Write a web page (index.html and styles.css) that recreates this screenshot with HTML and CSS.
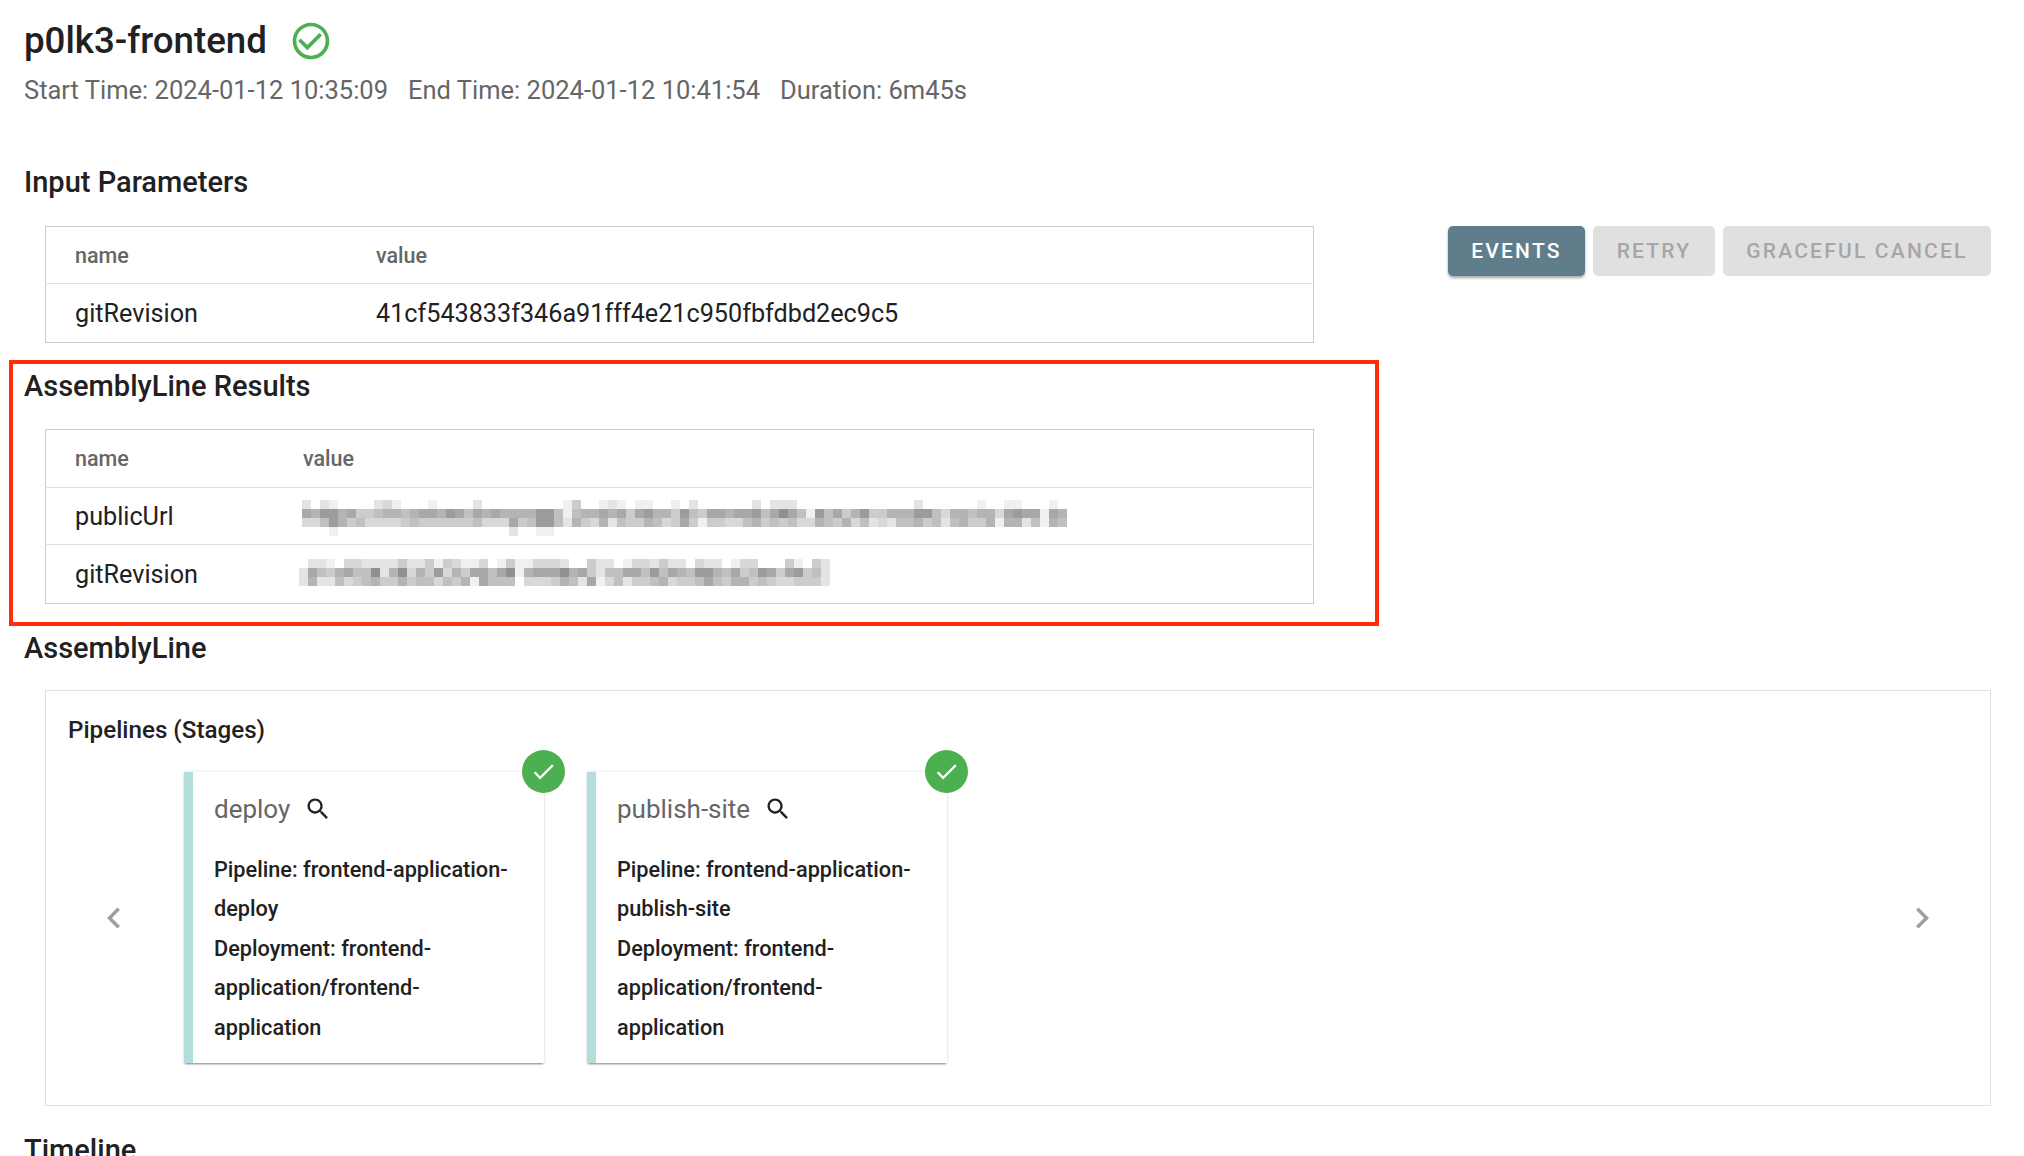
FILE: index.html
```html
<!DOCTYPE html>
<html lang="en">
<head>
<meta charset="utf-8">
<title>p0lk3-frontend</title>
<link rel="stylesheet" href="styles.css">
</head>
<body>
<main class="page">
  <header class="run-head">
    <div class="run-title">
      <h1>p0lk3-frontend</h1>
      <svg class="status-outline" viewBox="0 0 24 24"><path d="M16.59 7.58L10 14.17l-3.59-3.58L5 12l5 5 8-8zM12 2C6.48 2 2 6.48 2 12s4.48 10 10 10 10-4.48 10-10S17.52 2 12 2zm0 18c-4.42 0-8-3.58-8-8s3.58-8 8-8 8 3.58 8 8-3.58 8-8 8z"/></svg>
    </div>
    <p class="run-meta"><span>Start Time: 2024-01-12 10:35:09</span><span>End Time: 2024-01-12 10:41:54</span><span>Duration: 6m45s</span></p>
  </header>

  <section class="input-section">
    <h2>Input Parameters</h2>
    <div class="input-row">
      <table class="kv kv-input">
        <thead><tr><th>name</th><th>value</th></tr></thead>
        <tbody><tr><td>gitRevision</td><td>41cf543833f346a91fff4e21c950fbfdbd2ec9c5</td></tr></tbody>
      </table>
      <div class="actions">
        <button class="btn btn-primary" type="button">EVENTS</button>
        <button class="btn btn-off" type="button" disabled>RETRY</button>
        <button class="btn btn-off" type="button" disabled>GRACEFUL CANCEL</button>
      </div>
    </div>
  </section>

  <section class="results-section">
    <h2>AssemblyLine Results</h2>
    <table class="kv kv-results">
      <thead><tr><th>name</th><th>value</th></tr></thead>
      <tbody>
        <tr class="row-url"><td>publicUrl</td><td><svg class="mosaic mosaic-url" width="765" height="36" shape-rendering="crispEdges"
          data-rows="2021000023100010000200000000014001210110010200000020222000000000000020000001001100010|7688674456656776875767666688515667674786648547767785797518574684466688536656637877176|3358645333345444444533374588526436254465347414433564545336546352325564525644616625165|0001000000000000000000020011"></svg></td></tr>
        <tr class="row-rev"><td>gitRevision</td><td><svg class="mosaic mosaic-rev" width="531" height="27" shape-rendering="crispEdges"
          data-rows="02210332222422414311301411333200422013324220322013300041042|27546755926936483647757916777967425577585765886574587478452|26225345644645535461755503334652713524456344575466454334442"></svg></td></tr>
      </tbody>
    </table>
  </section>

  <section class="line-section">
    <h2>AssemblyLine</h2>
    <div class="panel">
      <h3>Pipelines (Stages)</h3>
      <div class="carousel">
        <svg class="chevron" viewBox="0 0 24 24"><path d="M15.41 7.41L14 6l-6 6 6 6 1.41-1.41L10.83 12z"/></svg>
        <div class="cards">
          <article class="card">
            <span class="badge"><svg viewBox="0 0 24 24"><path d="M9 16.17L4.83 12l-1.42 1.41L9 19 21 7l-1.41-1.41z"/></svg></span>
            <div class="card-title"><span>deploy</span><svg class="search" viewBox="0 0 24 24"><path d="M15.5 14h-.79l-.28-.27C15.41 12.59 16 11.11 16 9.5 16 5.91 13.09 3 9.5 3S3 5.91 3 9.5 5.91 16 9.5 16c1.61 0 3.09-.59 4.23-1.57l.27.28v.79l5 4.99L20.49 19l-4.99-5zm-6 0C7.01 14 5 11.99 5 9.5S7.01 5 9.5 5 14 7.01 14 9.5 11.99 14 9.5 14z"/></svg></div>
            <p>Pipeline: frontend-application-deploy</p>
            <p>Deployment: frontend-application/frontend-application</p>
          </article>
          <article class="card">
            <span class="badge"><svg viewBox="0 0 24 24"><path d="M9 16.17L4.83 12l-1.42 1.41L9 19 21 7l-1.41-1.41z"/></svg></span>
            <div class="card-title"><span>publish-site</span><svg class="search" viewBox="0 0 24 24"><path d="M15.5 14h-.79l-.28-.27C15.41 12.59 16 11.11 16 9.5 16 5.91 13.09 3 9.5 3S3 5.91 3 9.5 5.91 16 9.5 16c1.61 0 3.09-.59 4.23-1.57l.27.28v.79l5 4.99L20.49 19l-4.99-5zm-6 0C7.01 14 5 11.99 5 9.5S7.01 5 9.5 5 14 7.01 14 9.5 11.99 14 9.5 14z"/></svg></div>
            <p>Pipeline: frontend-application-publish-site</p>
            <p>Deployment: frontend-application/frontend-application</p>
          </article>
        </div>
        <svg class="chevron" viewBox="0 0 24 24"><path d="M10 6L8.59 7.41 13.17 12l-4.58 4.59L10 18l6-6z"/></svg>
      </div>
    </div>
  </section>

  <section class="timeline-section">
    <h2>Timeline</h2>
  </section>
</main>
<div class="callout"></div>
<script src="script.js"></script>
</body>
</html>
```

FILE: styles.css
```css
html, body {
  margin: 0;
  height: 1156px;
  overflow: hidden;
  background: #fff;
}
body {
  position: relative;
  font-family: Roboto, "Liberation Sans", sans-serif;
  color: #212121;
}
.page {
  padding: 17px 33px 0 24px;
}
.run-title {
  display: flex;
  align-items: center;
  height: 48px;
}
h1 {
  margin: 0;
  font-size: 36.7px;
  font-weight: 500;
  line-height: 48px;
}
.status-outline {
  width: 44px;
  height: 44px;
  margin-left: 22px;
  fill: #4caf50;
}
.run-meta {
  display: flex;
  gap: 20px;
  margin: 7px 0 0;
  font-size: 25.5px;
  line-height: 36px;
  color: #666;
}
h2 {
  margin: 0;
  font-size: 29px;
  font-weight: 500;
  line-height: 40px;
}
.input-section {
  margin-top: 54px;
}
.input-row {
  display: flex;
  justify-content: space-between;
  align-items: flex-start;
  margin-top: 24px;
}
.kv {
  width: 1269px;
  margin-left: 21px;
  border-collapse: collapse;
  table-layout: fixed;
  border: 1px solid #ccc;
}
.input-row .kv {
  flex: none;
}
.kv th:first-child, .kv td:first-child {
  padding-left: 29px;
}
.kv th, .kv td {
  text-align: left;
  padding: 0;
}
.kv th {
  height: 56px;
  font-size: 21.5px;
  font-weight: 500;
  color: #666;
}
.kv td {
  height: 58px;
  font-size: 25.2px;
  border-top: 1px solid #e0e0e0;
}
.kv-input th:first-child { width: 301px; }
.kv-results th:first-child { width: 228px; }
.kv-results th { height: 57px; }
.row-url td { height: 56px; }
.row-rev td { height: 58px; }
.mosaic {
  display: block;
}
.mosaic-url { margin: 4px 0 0 -1px; }
.mosaic-rev { margin: 0 0 4px -4px; }
.actions {
  display: flex;
  gap: 8px;
}
.btn {
  height: 50px;
  padding: 0 23.5px;
  border: 0;
  border-radius: 5px;
  font-family: inherit;
  font-size: 21px;
  font-weight: 500;
  letter-spacing: 2.2px;
}
.btn-primary {
  color: #fff;
  background: #607d8b;
  box-shadow: 0 2px 3px rgba(0, 0, 0, .35);
}
.btn-off {
  color: #a6a6a6;
  background: #e0e0e0;
}
.results-section {
  margin-top: 23px;
}
.results-section .kv {
  margin-top: 23px;
}
.line-section {
  margin-top: 24px;
}
.panel {
  height: 416px;
  margin: 22px 0 0 21px;
  border: 1px solid #e0e0e0;
  box-sizing: border-box;
  padding: 0 47px 0 22px;
}
h3 {
  margin: 0;
  padding-top: 23px;
  font-size: 24.2px;
  font-weight: 500;
  line-height: 32px;
}
.carousel {
  display: flex;
  justify-content: space-between;
  align-items: center;
  margin: 26px 0 0 25px;
}
.chevron {
  width: 42px;
  height: 42px;
  fill: #9e9e9e;
}
.cards {
  display: flex;
  gap: 43px;
  flex: 1;
  margin-left: 49px;
}
.card {
  position: relative;
  width: 360px;
  height: 291px;
  box-sizing: border-box;
  padding: 16px 24px 0 21px;
  border-left: 9px solid #b2dfdb;
  background: #fff;
  box-shadow: 0 2px 2px -1px rgba(0, 0, 0, .45), 0 0 3px rgba(0, 0, 0, .12);
}
.card-title {
  display: flex;
  align-items: center;
  gap: 14px;
  height: 42px;
  font-size: 26px;
  color: #666;
}
.search {
  width: 28px;
  height: 28px;
  fill: #212121;
}
.card p {
  margin: 0;
  font-size: 21.7px;
  font-weight: 500;
  line-height: 39.5px;
}
.card-title + p {
  margin-top: 19.5px;
}
.badge {
  position: absolute;
  top: -22px;
  right: -21px;
  display: flex;
  align-items: center;
  justify-content: center;
  width: 43px;
  height: 43px;
  border-radius: 50%;
  background: #4caf50;
}
.badge svg {
  width: 27px;
  height: 27px;
  fill: #fff;
}
.timeline-section {
  margin-top: 24px;
}
.callout {
  position: absolute;
  left: 9px;
  top: 360px;
  width: 1370px;
  height: 266px;
  box-sizing: border-box;
  border: 4px solid #ff2d0a;
  pointer-events: none;
}
```

FILE: script.js
```js
document.querySelectorAll('.mosaic').forEach(function (svg) {
  svg.dataset.rows.split('|').forEach(function (row, y) {
    row.split('').forEach(function (digit, x) {
      var d = Number(digit);
      if (!d) return;
      var g = 252 - 12 * d;
      var r = document.createElementNS('http://www.w3.org/2000/svg', 'rect');
      r.setAttribute('x', x * 9);
      r.setAttribute('y', y * 9);
      r.setAttribute('width', 9);
      r.setAttribute('height', 9);
      r.setAttribute('fill', 'rgb(' + g + ',' + g + ',' + g + ')');
      svg.appendChild(r);
    });
  });
});
```
